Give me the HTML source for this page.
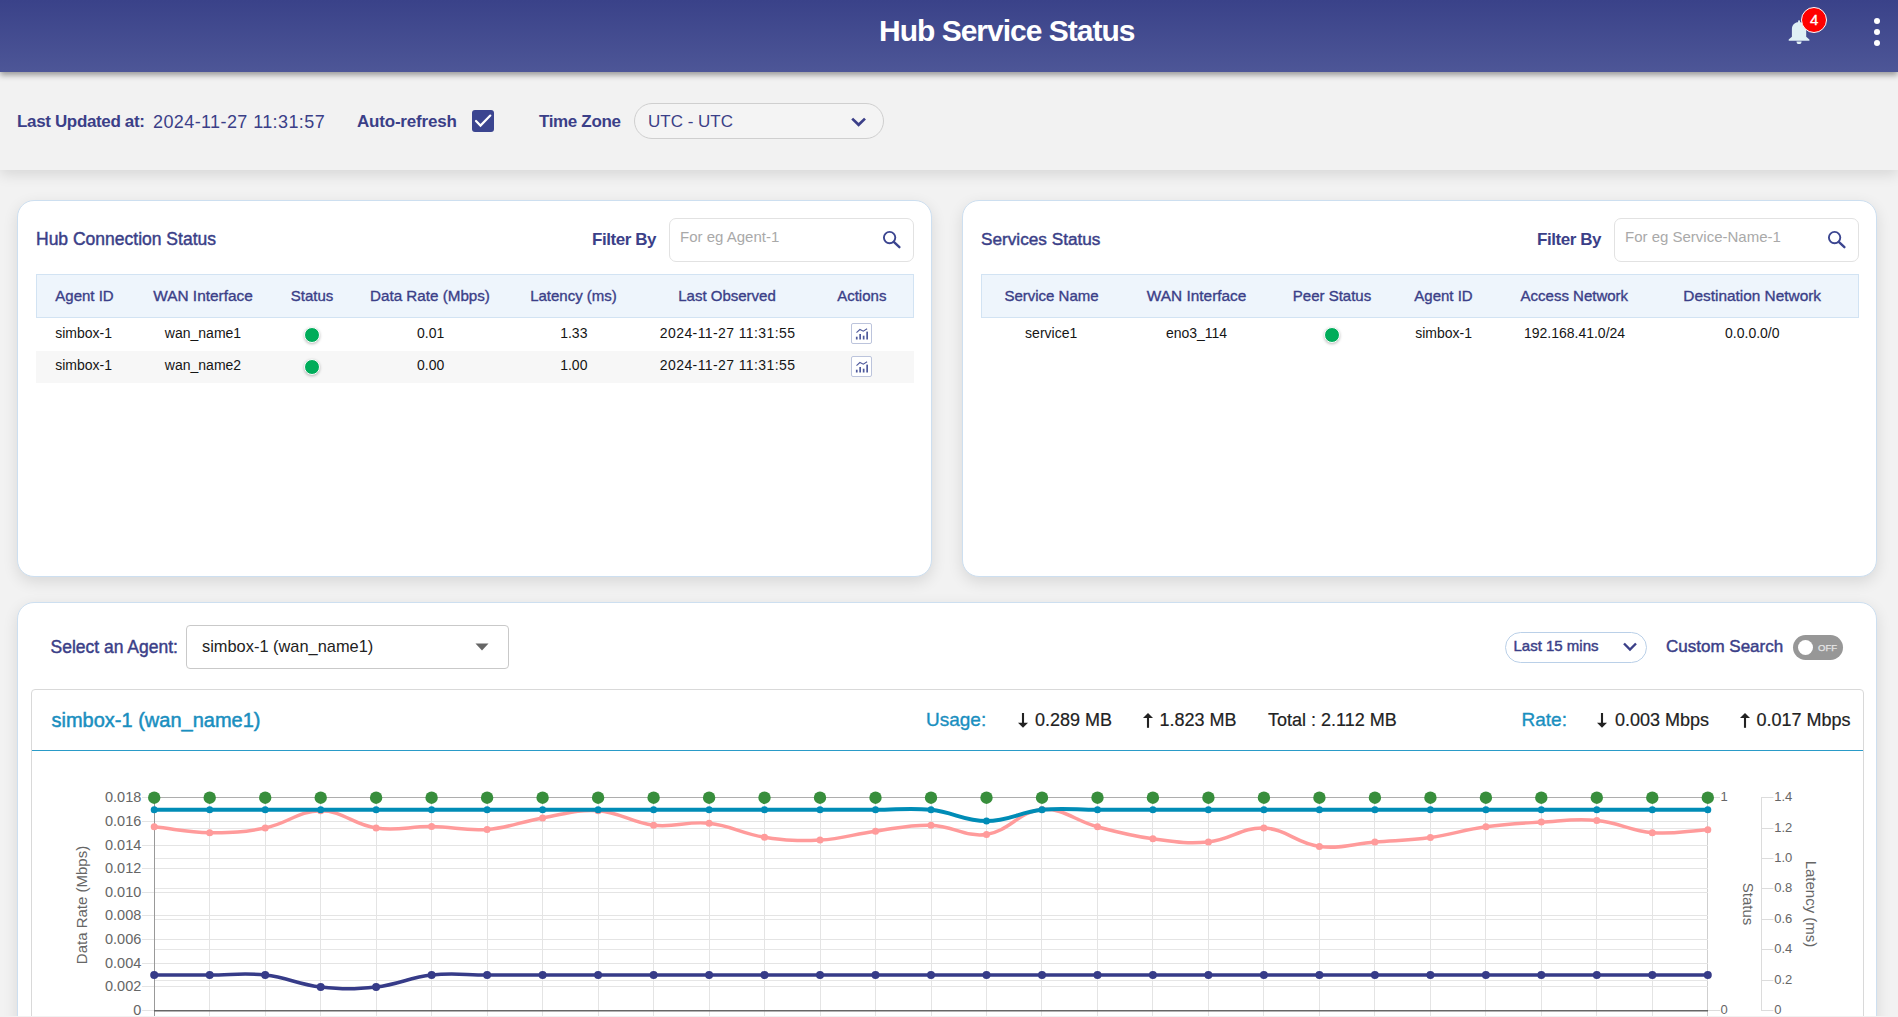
<!DOCTYPE html>
<html><head><meta charset="utf-8">
<style>
*{box-sizing:border-box;margin:0;padding:0}
html,body{width:1898px;height:1017px;overflow:hidden;background:#f2f2f2;font-family:"Liberation Sans",sans-serif;position:relative}
.t{position:absolute;white-space:nowrap;line-height:1}
.c{transform:translateX(-50%)}
#hdr{position:absolute;left:0;top:0;width:1898px;height:72px;background:linear-gradient(#3a4289,#4d5697);box-shadow:0 3px 6px rgba(0,0,0,0.38);z-index:3}
#bar{position:absolute;left:0;top:72px;width:1898px;height:98px;background:#f2f2f2;box-shadow:0 4px 14px rgba(0,0,0,0.12);z-index:2}
.ind{color:#3b3f88}
.panel{position:absolute;background:#fff;border:1px solid #cddff0;border-radius:17px;box-shadow:0 5px 15px rgba(0,0,0,0.11)}
.finp{position:absolute;border:1px solid #e2e2e2;border-radius:7px;background:#fff}
.thead{position:absolute;background:#eef5fc;border:1px solid #d2e3f3}
.th{font-size:15px;color:#3b3f88;-webkit-text-stroke:0.35px #3b3f88}
.sb{-webkit-text-stroke:0.45px #3b3f88}
.sb2{-webkit-text-stroke:0.2px #222}
.td{font-size:14px;color:#151515}
.dot{position:absolute;width:16px;height:16px;border-radius:50%;background:#00ac5a;border:1.6px solid #fff;box-shadow:0 1px 3px rgba(0,0,0,0.28)}
.act{position:absolute;width:21px;height:21px;border:1px solid #bcc4dc;border-radius:2px;background:#fff}
</style></head><body>
<div id="hdr">
  <div class="t" style="left:879px;top:16px;font-size:30px;font-weight:bold;color:#fff;letter-spacing:-1px">Hub Service Status</div>
  <!-- bell -->
  <svg style="position:absolute;left:1786px;top:17px" width="26" height="30" viewBox="0 0 26 30">
    <path d="M5.9 19.7 V12.5 C5.9 7.8 9 5 13.05 5 C17.1 5 20.2 7.8 20.2 12.5 V19.7 L23.4 22.6 V23.8 H2.7 V22.6 Z" fill="#e0f0f5"/>
    <rect x="12.1" y="3.2" width="1.9" height="3" rx="0.9" fill="#e0f0f5"/>
    <path d="M10.5 24.4 H15.6 A2.55 2.55 0 0 1 10.5 24.4 Z" fill="#e0f0f5"/>
  </svg>
  <div style="position:absolute;left:1801px;top:7px;width:26px;height:26px;border-radius:50%;background:#ff0000;border:1.2px solid #fff"></div>
  <div class="t" style="left:1810px;top:12.3px;font-size:15px;color:#fff;-webkit-text-stroke:0.3px #fff">4</div>
  <div style="position:absolute;left:1873.5px;top:17.5px;width:6.5px;height:6.5px;border-radius:50%;background:#fff"></div>
  <div style="position:absolute;left:1873.5px;top:28.7px;width:6.5px;height:6.5px;border-radius:50%;background:#fff"></div>
  <div style="position:absolute;left:1873.5px;top:39.8px;width:6.5px;height:6.5px;border-radius:50%;background:#fff"></div>
</div>
<div id="bar">
  <div class="t ind" style="left:17px;top:41px;font-size:17px;font-weight:bold;letter-spacing:-0.35px">Last Updated at:</div>
  <div class="t ind" style="left:153px;top:40.5px;font-size:18px;letter-spacing:0.4px">2024-11-27 11:31:57</div>
  <div class="t ind" style="left:357px;top:41px;font-size:17px;font-weight:bold;letter-spacing:-0.2px">Auto-refresh</div>
  <div style="position:absolute;left:472px;top:38px;width:22px;height:22px;border-radius:3px;background:#3b4590"></div>
  <svg style="position:absolute;left:472px;top:38px" width="22" height="22" viewBox="0 0 22 22"><path d="M4 11 L8.5 15.6 L18.3 5.6" fill="none" stroke="#fff" stroke-width="2.2" stroke-linecap="round"/></svg>
  <div class="t ind" style="left:539px;top:41px;font-size:17px;font-weight:bold;letter-spacing:-0.35px">Time Zone</div>
  <div style="position:absolute;left:634px;top:31px;width:250px;height:36px;border:1px solid #cfcfcf;border-radius:18px;background:#f4f4f4"></div>
  <div class="t ind" style="left:648px;top:40.5px;font-size:17px">UTC - UTC</div>
  <svg style="position:absolute;left:849px;top:43px" width="20" height="14" viewBox="0 0 20 14"><path d="M3.2 3.6 L9.6 9.8 L16 3.6" fill="none" stroke="#3b3f88" stroke-width="2.7"/></svg>
</div>

<!-- Panel 1 -->
<div class="panel" style="left:17px;top:200px;width:915px;height:377px"></div>
<div class="t ind sb" style="left:36px;top:231.2px;font-size:17.5px">Hub Connection Status</div>
<div class="t ind" style="left:592px;top:230.7px;font-size:17px;font-weight:bold;letter-spacing:-0.45px">Filter By</div>
<div class="finp" style="left:669px;top:218px;width:245px;height:44px"></div>
<div class="t" style="left:680px;top:229.3px;font-size:15px;color:#a9a9a9">For eg Agent-1</div>
<svg style="position:absolute;left:878px;top:226px" width="26" height="26" viewBox="0 0 26 26"><circle cx="11.6" cy="11.6" r="5.7" fill="none" stroke="#3b4590" stroke-width="1.9"/><path d="M15.8 15.9 L21.4 21.2" stroke="#3b4590" stroke-width="2.4" stroke-linecap="round"/></svg>
<div class="thead" style="left:36px;top:274px;width:878px;height:44px"></div>
<div class="t th c" style="left:84.5px;top:287.9px">Agent ID</div>
<div class="t th c" style="left:203px;top:287.9px;font-size:15.4px">WAN Interface</div>
<div class="t th c" style="left:312px;top:287.9px">Status</div>
<div class="t th c" style="left:430px;top:287.9px;font-size:15.2px">Data Rate (Mbps)</div>
<div class="t th c" style="left:573.5px;top:287.9px">Latency (ms)</div>
<div class="t th c" style="left:727px;top:287.9px">Last Observed</div>
<div class="t th c" style="left:861.8px;top:287.9px">Actions</div>
<div style="position:absolute;left:36px;top:350.5px;width:878px;height:32.5px;background:#f7f7f7"></div>
<div class="t td c" style="left:83.6px;top:325.6px">simbox-1</div>
<div class="t td c" style="left:203px;top:325.6px">wan_name1</div>
<div class="dot" style="left:304px;top:326.7px"></div>
<div class="t td c" style="left:430.6px;top:325.6px">0.01</div>
<div class="t td c" style="left:573.8px;top:325.6px">1.33</div>
<div class="t td c" style="left:727.6px;top:325.6px;letter-spacing:0.4px">2024-11-27 11:31:55</div>
<div class="act" style="left:851.4px;top:323.3px"><svg style="position:absolute;left:0;top:0" width="19" height="19" viewBox="0 0 19 19"><g fill="#4f5a9c"><rect x="3.9" y="12.7" width="1.7" height="2.8"/><rect x="7.3" y="10" width="1.7" height="5.5"/><rect x="10.8" y="11.7" width="1.7" height="3.8"/><rect x="14.3" y="7.6" width="1.7" height="7.9"/></g><path d="M4.5 8.7 L7.9 5.5 L11.3 7.2 L15.1 4.8" fill="none" stroke="#4f5a9c" stroke-width="1.1"/></svg></div>
<div class="t td c" style="left:83.6px;top:358.2px">simbox-1</div>
<div class="t td c" style="left:203px;top:358.2px">wan_name2</div>
<div class="dot" style="left:304px;top:359px"></div>
<div class="t td c" style="left:430.6px;top:358.2px">0.00</div>
<div class="t td c" style="left:573.8px;top:358.2px">1.00</div>
<div class="t td c" style="left:727.6px;top:358.2px;letter-spacing:0.4px">2024-11-27 11:31:55</div>
<div class="act" style="left:851.4px;top:356px"><svg style="position:absolute;left:0;top:0" width="19" height="19" viewBox="0 0 19 19"><g fill="#4f5a9c"><rect x="3.9" y="12.7" width="1.7" height="2.8"/><rect x="7.3" y="10" width="1.7" height="5.5"/><rect x="10.8" y="11.7" width="1.7" height="3.8"/><rect x="14.3" y="7.6" width="1.7" height="7.9"/></g><path d="M4.5 8.7 L7.9 5.5 L11.3 7.2 L15.1 4.8" fill="none" stroke="#4f5a9c" stroke-width="1.1"/></svg></div>

<!-- Panel 2 -->
<div class="panel" style="left:962px;top:200px;width:915px;height:377px"></div>
<div class="t ind sb" style="left:981px;top:231.2px;font-size:17.2px">Services Status</div>
<div class="t ind" style="left:1537px;top:230.7px;font-size:17px;font-weight:bold;letter-spacing:-0.45px">Filter By</div>
<div class="finp" style="left:1614px;top:218px;width:245px;height:44px"></div>
<div class="t" style="left:1625px;top:229.3px;font-size:15px;color:#a9a9a9">For eg Service-Name-1</div>
<svg style="position:absolute;left:1823px;top:226px" width="26" height="26" viewBox="0 0 26 26"><circle cx="11.6" cy="11.6" r="5.7" fill="none" stroke="#3b4590" stroke-width="1.9"/><path d="M15.8 15.9 L21.4 21.2" stroke="#3b4590" stroke-width="2.4" stroke-linecap="round"/></svg>
<div class="thead" style="left:981px;top:274px;width:878px;height:44px"></div>
<div class="t th c" style="left:1051.5px;top:287.9px">Service Name</div>
<div class="t th c" style="left:1196.6px;top:287.9px;font-size:15.4px">WAN Interface</div>
<div class="t th c" style="left:1332px;top:287.9px">Peer Status</div>
<div class="t th c" style="left:1443.5px;top:287.9px">Agent ID</div>
<div class="t th c" style="left:1574.3px;top:287.9px">Access Network</div>
<div class="t th c" style="left:1752.2px;top:287.9px;font-size:15.4px">Destination Network</div>
<div class="t td c" style="left:1051.2px;top:325.6px">service1</div>
<div class="t td c" style="left:1196.5px;top:325.6px">eno3_114</div>
<div class="dot" style="left:1324px;top:326.7px"></div>
<div class="t td c" style="left:1443.6px;top:325.6px">simbox-1</div>
<div class="t td c" style="left:1574.5px;top:325.6px">192.168.41.0/24</div>
<div class="t td c" style="left:1752.3px;top:325.6px">0.0.0.0/0</div>

<!-- Panel 3 -->
<div class="panel" style="left:17px;top:602px;width:1860px;height:460px"></div>
<div class="t ind sb" style="left:50.5px;top:639.1px;font-size:17.5px">Select an Agent:</div>
<div style="position:absolute;left:186px;top:625px;width:323px;height:44px;border:1px solid #c9c9c9;border-radius:4px;background:#fff"></div>
<div class="t" style="left:202px;top:638.4px;font-size:16.4px;color:#222">simbox-1 (wan_name1)</div>
<svg style="position:absolute;left:474px;top:642px" width="16" height="10" viewBox="0 0 16 10"><path d="M1.5 1.5 h13 l-6.5 7z" fill="#666"/></svg>
<div style="position:absolute;left:1505px;top:632px;width:142px;height:31px;border:1px solid #bad0e8;border-radius:16px;background:#fff"></div>
<div class="t ind sb" style="left:1513.5px;top:638.3px;font-size:15px">Last 15 mins</div>
<svg style="position:absolute;left:1620px;top:639px" width="20" height="16" viewBox="0 0 20 16"><path d="M4 4.5 l6 6 l6 -6" fill="none" stroke="#3b3f88" stroke-width="2.4"/></svg>
<div class="t ind sb" style="left:1666px;top:638.2px;font-size:17px">Custom Search</div>
<div style="position:absolute;left:1793px;top:635px;width:49.5px;height:25px;border-radius:13px;background:#979797"></div>
<div style="position:absolute;left:1798px;top:640px;width:15.2px;height:15.2px;border-radius:50%;background:#fff"></div>
<div class="t" style="left:1818px;top:643px;font-size:9.5px;color:#e6e6e6;-webkit-text-stroke:0.25px #e6e6e6">OFF</div>

<!-- chart card -->
<div style="position:absolute;left:31px;top:689px;width:1833px;height:340px;border:1px solid #d9d9d9;border-radius:4px;background:#fff"></div>
<div style="position:absolute;left:32px;top:749.5px;width:1831px;height:1.5px;background:#2a9bc8"></div>
<div class="t" style="left:51.5px;top:709.7px;font-size:20px;color:#1a8fbf;-webkit-text-stroke:0.5px #1a8fbf">simbox-1 (wan_name1)</div>
<div class="t sb" style="left:926px;top:710.3px;font-size:19px;color:#1a8fbf;-webkit-text-stroke:0.35px #1a8fbf">Usage:</div>
<svg style="position:absolute;left:1017.0px;top:711px" width="12" height="18" viewBox="0 0 12 18"><rect x="4.95" y="2" width="2.1" height="12" fill="#222"/><path d="M1 11.8 L6 16.8 L11 11.8 Z" fill="#222"/></svg>
<div class="t sb2" style="left:1035px;top:710.8px;font-size:18px;color:#222">0.289 MB</div>
<svg style="position:absolute;left:1142.0px;top:711px" width="12" height="18" viewBox="0 0 12 18"><rect x="4.95" y="4" width="2.1" height="12.8" fill="#222"/><path d="M1 7 L6 2 L11 7 Z" fill="#222"/></svg>
<div class="t sb2" style="left:1159.5px;top:710.8px;font-size:18px;color:#222">1.823 MB</div>
<div class="t sb2" style="left:1268px;top:710.8px;font-size:18px;color:#222">Total : 2.112 MB</div>
<div class="t sb" style="left:1521.5px;top:710.3px;font-size:19px;color:#1a8fbf;-webkit-text-stroke:0.35px #1a8fbf">Rate:</div>
<svg style="position:absolute;left:1596.0px;top:711px" width="12" height="18" viewBox="0 0 12 18"><rect x="4.95" y="2" width="2.1" height="12" fill="#222"/><path d="M1 11.8 L6 16.8 L11 11.8 Z" fill="#222"/></svg>
<div class="t sb2" style="left:1615px;top:710.8px;font-size:18px;color:#222">0.003 Mbps</div>
<svg style="position:absolute;left:1738.5px;top:711px" width="12" height="18" viewBox="0 0 12 18"><rect x="4.95" y="4" width="2.1" height="12.8" fill="#222"/><path d="M1 7 L6 2 L11 7 Z" fill="#222"/></svg>
<div class="t sb2" style="left:1756.4px;top:710.8px;font-size:18px;color:#222">0.017 Mbps</div>
<svg id="chart" width="1898" height="1017" viewBox="0 0 1898 1017" style="position:absolute;left:0;top:0" font-family="Liberation Sans, sans-serif" font-size="14" fill="#666">
<line x1="154.5" y1="797" x2="154.5" y2="1016" stroke="#e4e4e4" stroke-width="1"/>
<line x1="209.5" y1="797" x2="209.5" y2="1016" stroke="#e4e4e4" stroke-width="1"/>
<line x1="265.5" y1="797" x2="265.5" y2="1016" stroke="#e4e4e4" stroke-width="1"/>
<line x1="320.5" y1="797" x2="320.5" y2="1016" stroke="#e4e4e4" stroke-width="1"/>
<line x1="376.5" y1="797" x2="376.5" y2="1016" stroke="#e4e4e4" stroke-width="1"/>
<line x1="431.5" y1="797" x2="431.5" y2="1016" stroke="#e4e4e4" stroke-width="1"/>
<line x1="487.5" y1="797" x2="487.5" y2="1016" stroke="#e4e4e4" stroke-width="1"/>
<line x1="542.5" y1="797" x2="542.5" y2="1016" stroke="#e4e4e4" stroke-width="1"/>
<line x1="598.5" y1="797" x2="598.5" y2="1016" stroke="#e4e4e4" stroke-width="1"/>
<line x1="653.5" y1="797" x2="653.5" y2="1016" stroke="#e4e4e4" stroke-width="1"/>
<line x1="709.5" y1="797" x2="709.5" y2="1016" stroke="#e4e4e4" stroke-width="1"/>
<line x1="764.5" y1="797" x2="764.5" y2="1016" stroke="#e4e4e4" stroke-width="1"/>
<line x1="820.5" y1="797" x2="820.5" y2="1016" stroke="#e4e4e4" stroke-width="1"/>
<line x1="875.5" y1="797" x2="875.5" y2="1016" stroke="#e4e4e4" stroke-width="1"/>
<line x1="931.5" y1="797" x2="931.5" y2="1016" stroke="#e4e4e4" stroke-width="1"/>
<line x1="986.5" y1="797" x2="986.5" y2="1016" stroke="#e4e4e4" stroke-width="1"/>
<line x1="1041.5" y1="797" x2="1041.5" y2="1016" stroke="#e4e4e4" stroke-width="1"/>
<line x1="1097.5" y1="797" x2="1097.5" y2="1016" stroke="#e4e4e4" stroke-width="1"/>
<line x1="1152.5" y1="797" x2="1152.5" y2="1016" stroke="#e4e4e4" stroke-width="1"/>
<line x1="1208.5" y1="797" x2="1208.5" y2="1016" stroke="#e4e4e4" stroke-width="1"/>
<line x1="1263.5" y1="797" x2="1263.5" y2="1016" stroke="#e4e4e4" stroke-width="1"/>
<line x1="1319.5" y1="797" x2="1319.5" y2="1016" stroke="#e4e4e4" stroke-width="1"/>
<line x1="1374.5" y1="797" x2="1374.5" y2="1016" stroke="#e4e4e4" stroke-width="1"/>
<line x1="1430.5" y1="797" x2="1430.5" y2="1016" stroke="#e4e4e4" stroke-width="1"/>
<line x1="1485.5" y1="797" x2="1485.5" y2="1016" stroke="#e4e4e4" stroke-width="1"/>
<line x1="1541.5" y1="797" x2="1541.5" y2="1016" stroke="#e4e4e4" stroke-width="1"/>
<line x1="1596.5" y1="797" x2="1596.5" y2="1016" stroke="#e4e4e4" stroke-width="1"/>
<line x1="1652.5" y1="797" x2="1652.5" y2="1016" stroke="#e4e4e4" stroke-width="1"/>
<line x1="1707.5" y1="797" x2="1707.5" y2="1016" stroke="#cfcfcf" stroke-width="1"/>
<line x1="142" y1="1010.5" x2="1708" y2="1010.5" stroke="#e4e4e4" stroke-width="1"/>
<line x1="142" y1="986.5" x2="1708" y2="986.5" stroke="#e4e4e4" stroke-width="1"/>
<line x1="142" y1="963.5" x2="1708" y2="963.5" stroke="#e4e4e4" stroke-width="1"/>
<line x1="142" y1="939.5" x2="1708" y2="939.5" stroke="#e4e4e4" stroke-width="1"/>
<line x1="142" y1="915.5" x2="1708" y2="915.5" stroke="#e4e4e4" stroke-width="1"/>
<line x1="142" y1="892.5" x2="1708" y2="892.5" stroke="#e4e4e4" stroke-width="1"/>
<line x1="142" y1="868.5" x2="1708" y2="868.5" stroke="#e4e4e4" stroke-width="1"/>
<line x1="142" y1="845.5" x2="1708" y2="845.5" stroke="#e4e4e4" stroke-width="1"/>
<line x1="142" y1="821.5" x2="1708" y2="821.5" stroke="#e4e4e4" stroke-width="1"/>
<line x1="142" y1="797.5" x2="1708" y2="797.5" stroke="#e4e4e4" stroke-width="1"/>
<line x1="154.3" y1="1010.5" x2="1708" y2="1010.5" stroke="#e6e6e6" stroke-width="1"/>
<line x1="154.3" y1="980.5" x2="1708" y2="980.5" stroke="#e6e6e6" stroke-width="1"/>
<line x1="154.3" y1="949.5" x2="1708" y2="949.5" stroke="#e6e6e6" stroke-width="1"/>
<line x1="154.3" y1="919.5" x2="1708" y2="919.5" stroke="#e6e6e6" stroke-width="1"/>
<line x1="154.3" y1="888.5" x2="1708" y2="888.5" stroke="#e6e6e6" stroke-width="1"/>
<line x1="154.3" y1="858.5" x2="1708" y2="858.5" stroke="#e6e6e6" stroke-width="1"/>
<line x1="154.3" y1="828.5" x2="1708" y2="828.5" stroke="#e6e6e6" stroke-width="1"/>
<line x1="154.3" y1="797.5" x2="1708" y2="797.5" stroke="#e6e6e6" stroke-width="1"/>
<line x1="142" y1="1010.5" x2="154.3" y2="1010.5" stroke="#e4e4e4" stroke-width="1"/>
<line x1="142" y1="986.5" x2="154.3" y2="986.5" stroke="#e4e4e4" stroke-width="1"/>
<line x1="142" y1="963.5" x2="154.3" y2="963.5" stroke="#e4e4e4" stroke-width="1"/>
<line x1="142" y1="939.5" x2="154.3" y2="939.5" stroke="#e4e4e4" stroke-width="1"/>
<line x1="142" y1="915.5" x2="154.3" y2="915.5" stroke="#e4e4e4" stroke-width="1"/>
<line x1="142" y1="892.5" x2="154.3" y2="892.5" stroke="#e4e4e4" stroke-width="1"/>
<line x1="142" y1="868.5" x2="154.3" y2="868.5" stroke="#e4e4e4" stroke-width="1"/>
<line x1="142" y1="845.5" x2="154.3" y2="845.5" stroke="#e4e4e4" stroke-width="1"/>
<line x1="142" y1="821.5" x2="154.3" y2="821.5" stroke="#e4e4e4" stroke-width="1"/>
<line x1="142" y1="797.5" x2="154.3" y2="797.5" stroke="#e4e4e4" stroke-width="1"/>
<line x1="154" y1="797.5" x2="1708" y2="797.5" stroke="#adadad" stroke-width="1"/>
<line x1="154.5" y1="797" x2="154.5" y2="1016" stroke="#999" stroke-width="1"/>
<line x1="154" y1="1010.75" x2="1708" y2="1010.75" stroke="#666" stroke-width="1.5"/>
<text x="141.3" y="1015.4" text-anchor="end" font-size="14.5">0</text>
<text x="141.3" y="991.4" text-anchor="end" font-size="14.5">0.002</text>
<text x="141.3" y="968.4" text-anchor="end" font-size="14.5">0.004</text>
<text x="141.3" y="944.4" text-anchor="end" font-size="14.5">0.006</text>
<text x="141.3" y="920.4" text-anchor="end" font-size="14.5">0.008</text>
<text x="141.3" y="897.4" text-anchor="end" font-size="14.5">0.010</text>
<text x="141.3" y="873.4" text-anchor="end" font-size="14.5">0.012</text>
<text x="141.3" y="850.4" text-anchor="end" font-size="14.5">0.014</text>
<text x="141.3" y="826.4" text-anchor="end" font-size="14.5">0.016</text>
<text x="141.3" y="802.4" text-anchor="end" font-size="14.5">0.018</text>
<line x1="1761.5" y1="797" x2="1761.5" y2="1011" stroke="#dcdcdc" stroke-width="1"/>
<line x1="1761.5" y1="1010.5" x2="1773.5" y2="1010.5" stroke="#dcdcdc" stroke-width="1"/>
<text x="1774.2" y="1014.1" font-size="13">0</text>
<line x1="1761.5" y1="980.5" x2="1773.5" y2="980.5" stroke="#dcdcdc" stroke-width="1"/>
<text x="1774.2" y="984.1" font-size="13">0.2</text>
<line x1="1761.5" y1="949.5" x2="1773.5" y2="949.5" stroke="#dcdcdc" stroke-width="1"/>
<text x="1774.2" y="953.1" font-size="13">0.4</text>
<line x1="1761.5" y1="919.5" x2="1773.5" y2="919.5" stroke="#dcdcdc" stroke-width="1"/>
<text x="1774.2" y="923.1" font-size="13">0.6</text>
<line x1="1761.5" y1="888.5" x2="1773.5" y2="888.5" stroke="#dcdcdc" stroke-width="1"/>
<text x="1774.2" y="892.1" font-size="13">0.8</text>
<line x1="1761.5" y1="858.5" x2="1773.5" y2="858.5" stroke="#dcdcdc" stroke-width="1"/>
<text x="1774.2" y="862.1" font-size="13">1.0</text>
<line x1="1761.5" y1="828.5" x2="1773.5" y2="828.5" stroke="#dcdcdc" stroke-width="1"/>
<text x="1774.2" y="832.1" font-size="13">1.2</text>
<line x1="1761.5" y1="797.5" x2="1773.5" y2="797.5" stroke="#dcdcdc" stroke-width="1"/>
<text x="1774.2" y="801.1" font-size="13">1.4</text>
<line x1="1708" y1="797.5" x2="1720" y2="797.5" stroke="#dcdcdc" stroke-width="1"/>
<line x1="1708" y1="1010.5" x2="1720" y2="1010.5" stroke="#dcdcdc" stroke-width="1"/>
<text x="1720.5" y="801" font-size="13">1</text>
<text x="1720.5" y="1014" font-size="13">0</text>
<text transform="translate(86.8,905) rotate(-90)" text-anchor="middle" font-size="15">Data Rate (Mbps)</text>
<text transform="translate(1742.7,904) rotate(90)" text-anchor="middle" font-size="15">Status</text>
<text transform="translate(1805.8,904) rotate(90)" text-anchor="middle" font-size="15">Latency (ms)</text>
<path d="M154.2,826.8 C176.4,829.2 187.5,832.5 209.7,832.7 C231.9,832.9 243.4,832.3 265.2,828.0 C287.8,823.5 298.5,810.8 320.7,810.8 C342.9,810.8 353.4,824.8 376.1,828.0 C397.8,831.1 409.4,826.3 431.6,826.6 C453.8,826.9 465.1,831.2 487.1,829.5 C509.5,827.7 520.3,821.7 542.6,817.9 C564.7,814.2 576.2,809.3 598.1,810.7 C620.6,812.2 631.0,822.6 653.6,825.2 C675.4,827.7 687.2,820.9 709.1,823.3 C731.6,825.7 742.0,833.8 764.5,837.2 C786.4,840.5 798.0,841.3 820.0,840.1 C842.4,838.9 853.2,834.2 875.5,831.2 C897.6,828.2 908.9,824.6 931.0,825.2 C953.3,825.8 965.2,837.4 986.5,834.4 C1009.6,831.1 1019.3,811.0 1042.0,809.4 C1063.7,807.9 1075.0,820.8 1097.5,826.8 C1119.4,832.6 1130.5,835.7 1152.9,838.8 C1174.9,841.8 1186.6,844.1 1208.4,842.0 C1231.0,839.8 1242.0,827.1 1263.9,828.0 C1286.4,828.9 1296.7,843.5 1319.4,846.4 C1341.1,849.1 1352.7,843.8 1374.9,842.0 C1397.1,840.2 1408.3,840.5 1430.4,837.5 C1452.7,834.4 1463.5,829.9 1485.9,826.8 C1507.9,823.7 1519.1,823.4 1541.3,822.1 C1563.5,820.8 1574.9,818.4 1596.8,820.5 C1619.3,822.6 1629.9,830.8 1652.3,832.7 C1674.3,834.5 1685.6,830.9 1707.8,829.7" fill="none" stroke="#ff9b9b" stroke-width="3.5"/>
<circle cx="154.2" cy="826.8" r="3.5" fill="#ff9b9b"/>
<circle cx="209.7" cy="832.7" r="3.5" fill="#ff9b9b"/>
<circle cx="265.2" cy="828.0" r="3.5" fill="#ff9b9b"/>
<circle cx="320.7" cy="810.8" r="3.5" fill="#ff9b9b"/>
<circle cx="376.1" cy="828.0" r="3.5" fill="#ff9b9b"/>
<circle cx="431.6" cy="826.6" r="3.5" fill="#ff9b9b"/>
<circle cx="487.1" cy="829.5" r="3.5" fill="#ff9b9b"/>
<circle cx="542.6" cy="817.9" r="3.5" fill="#ff9b9b"/>
<circle cx="598.1" cy="810.7" r="3.5" fill="#ff9b9b"/>
<circle cx="653.6" cy="825.2" r="3.5" fill="#ff9b9b"/>
<circle cx="709.1" cy="823.3" r="3.5" fill="#ff9b9b"/>
<circle cx="764.5" cy="837.2" r="3.5" fill="#ff9b9b"/>
<circle cx="820.0" cy="840.1" r="3.5" fill="#ff9b9b"/>
<circle cx="875.5" cy="831.2" r="3.5" fill="#ff9b9b"/>
<circle cx="931.0" cy="825.2" r="3.5" fill="#ff9b9b"/>
<circle cx="986.5" cy="834.4" r="3.5" fill="#ff9b9b"/>
<circle cx="1042.0" cy="809.4" r="3.5" fill="#ff9b9b"/>
<circle cx="1097.5" cy="826.8" r="3.5" fill="#ff9b9b"/>
<circle cx="1152.9" cy="838.8" r="3.5" fill="#ff9b9b"/>
<circle cx="1208.4" cy="842.0" r="3.5" fill="#ff9b9b"/>
<circle cx="1263.9" cy="828.0" r="3.5" fill="#ff9b9b"/>
<circle cx="1319.4" cy="846.4" r="3.5" fill="#ff9b9b"/>
<circle cx="1374.9" cy="842.0" r="3.5" fill="#ff9b9b"/>
<circle cx="1430.4" cy="837.5" r="3.5" fill="#ff9b9b"/>
<circle cx="1485.9" cy="826.8" r="3.5" fill="#ff9b9b"/>
<circle cx="1541.3" cy="822.1" r="3.5" fill="#ff9b9b"/>
<circle cx="1596.8" cy="820.5" r="3.5" fill="#ff9b9b"/>
<circle cx="1652.3" cy="832.7" r="3.5" fill="#ff9b9b"/>
<circle cx="1707.8" cy="829.7" r="3.5" fill="#ff9b9b"/>
<path d="M154.2,809.8 C176.4,809.8 187.5,809.8 209.7,809.8 C231.9,809.8 243.0,809.8 265.2,809.8 C287.4,809.8 298.5,809.8 320.7,809.8 C342.9,809.8 353.9,809.8 376.1,809.8 C398.3,809.8 409.4,809.8 431.6,809.8 C453.8,809.8 464.9,809.8 487.1,809.8 C509.3,809.8 520.4,809.8 542.6,809.8 C564.8,809.8 575.9,809.8 598.1,809.8 C620.3,809.8 631.4,809.8 653.6,809.8 C675.8,809.8 686.9,809.8 709.1,809.8 C731.3,809.8 742.4,809.8 764.5,809.8 C786.7,809.8 797.8,809.8 820.0,809.8 C842.2,809.8 853.3,809.8 875.5,809.8 C897.7,809.8 909.0,807.6 931.0,809.8 C953.4,812.1 964.3,821.1 986.5,821.1 C1008.7,821.1 1019.6,812.1 1042.0,809.8 C1063.9,807.6 1075.3,809.8 1097.5,809.8 C1119.7,809.8 1130.8,809.8 1152.9,809.8 C1175.1,809.8 1186.2,809.8 1208.4,809.8 C1230.6,809.8 1241.7,809.8 1263.9,809.8 C1286.1,809.8 1297.2,809.8 1319.4,809.8 C1341.6,809.8 1352.7,809.8 1374.9,809.8 C1397.1,809.8 1408.2,809.8 1430.4,809.8 C1452.6,809.8 1463.7,809.8 1485.9,809.8 C1508.1,809.8 1519.2,809.8 1541.3,809.8 C1563.5,809.8 1574.6,809.8 1596.8,809.8 C1619.0,809.8 1630.1,809.8 1652.3,809.8 C1674.5,809.8 1685.6,809.8 1707.8,809.8" fill="none" stroke="#008cb6" stroke-width="4"/>
<circle cx="154.2" cy="809.8" r="3.5" fill="#008cb6"/>
<circle cx="209.7" cy="809.8" r="3.5" fill="#008cb6"/>
<circle cx="265.2" cy="809.8" r="3.5" fill="#008cb6"/>
<circle cx="320.7" cy="809.8" r="3.5" fill="#008cb6"/>
<circle cx="376.1" cy="809.8" r="3.5" fill="#008cb6"/>
<circle cx="431.6" cy="809.8" r="3.5" fill="#008cb6"/>
<circle cx="487.1" cy="809.8" r="3.5" fill="#008cb6"/>
<circle cx="542.6" cy="809.8" r="3.5" fill="#008cb6"/>
<circle cx="598.1" cy="809.8" r="3.5" fill="#008cb6"/>
<circle cx="653.6" cy="809.8" r="3.5" fill="#008cb6"/>
<circle cx="709.1" cy="809.8" r="3.5" fill="#008cb6"/>
<circle cx="764.5" cy="809.8" r="3.5" fill="#008cb6"/>
<circle cx="820.0" cy="809.8" r="3.5" fill="#008cb6"/>
<circle cx="875.5" cy="809.8" r="3.5" fill="#008cb6"/>
<circle cx="931.0" cy="809.8" r="3.5" fill="#008cb6"/>
<circle cx="986.5" cy="821.1" r="3.5" fill="#008cb6"/>
<circle cx="1042.0" cy="809.8" r="3.5" fill="#008cb6"/>
<circle cx="1097.5" cy="809.8" r="3.5" fill="#008cb6"/>
<circle cx="1152.9" cy="809.8" r="3.5" fill="#008cb6"/>
<circle cx="1208.4" cy="809.8" r="3.5" fill="#008cb6"/>
<circle cx="1263.9" cy="809.8" r="3.5" fill="#008cb6"/>
<circle cx="1319.4" cy="809.8" r="3.5" fill="#008cb6"/>
<circle cx="1374.9" cy="809.8" r="3.5" fill="#008cb6"/>
<circle cx="1430.4" cy="809.8" r="3.5" fill="#008cb6"/>
<circle cx="1485.9" cy="809.8" r="3.5" fill="#008cb6"/>
<circle cx="1541.3" cy="809.8" r="3.5" fill="#008cb6"/>
<circle cx="1596.8" cy="809.8" r="3.5" fill="#008cb6"/>
<circle cx="1652.3" cy="809.8" r="3.5" fill="#008cb6"/>
<circle cx="1707.8" cy="809.8" r="3.5" fill="#008cb6"/>
<path d="M154.2,975.0 C176.4,975.0 187.5,975.0 209.7,975.0 C231.9,975.0 243.2,972.6 265.2,975.0 C287.6,977.4 298.2,984.6 320.7,987.0 C342.6,989.4 354.2,989.4 376.1,987.0 C398.6,984.6 409.2,977.4 431.6,975.0 C453.6,972.6 464.9,975.0 487.1,975.0 C509.3,975.0 520.4,975.0 542.6,975.0 C564.8,975.0 575.9,975.0 598.1,975.0 C620.3,975.0 631.4,975.0 653.6,975.0 C675.8,975.0 686.9,975.0 709.1,975.0 C731.3,975.0 742.4,975.0 764.5,975.0 C786.7,975.0 797.8,975.0 820.0,975.0 C842.2,975.0 853.3,975.0 875.5,975.0 C897.7,975.0 908.8,975.0 931.0,975.0 C953.2,975.0 964.3,975.0 986.5,975.0 C1008.7,975.0 1019.8,975.0 1042.0,975.0 C1064.2,975.0 1075.3,975.0 1097.5,975.0 C1119.7,975.0 1130.8,975.0 1152.9,975.0 C1175.1,975.0 1186.2,975.0 1208.4,975.0 C1230.6,975.0 1241.7,975.0 1263.9,975.0 C1286.1,975.0 1297.2,975.0 1319.4,975.0 C1341.6,975.0 1352.7,975.0 1374.9,975.0 C1397.1,975.0 1408.2,975.0 1430.4,975.0 C1452.6,975.0 1463.7,975.0 1485.9,975.0 C1508.1,975.0 1519.2,975.0 1541.3,975.0 C1563.5,975.0 1574.6,975.0 1596.8,975.0 C1619.0,975.0 1630.1,975.0 1652.3,975.0 C1674.5,975.0 1685.6,975.0 1707.8,975.0" fill="none" stroke="#363b88" stroke-width="3.5"/>
<circle cx="154.2" cy="975.0" r="4" fill="#363b88"/>
<circle cx="209.7" cy="975.0" r="4" fill="#363b88"/>
<circle cx="265.2" cy="975.0" r="4" fill="#363b88"/>
<circle cx="320.7" cy="987.0" r="4" fill="#363b88"/>
<circle cx="376.1" cy="987.0" r="4" fill="#363b88"/>
<circle cx="431.6" cy="975.0" r="4" fill="#363b88"/>
<circle cx="487.1" cy="975.0" r="4" fill="#363b88"/>
<circle cx="542.6" cy="975.0" r="4" fill="#363b88"/>
<circle cx="598.1" cy="975.0" r="4" fill="#363b88"/>
<circle cx="653.6" cy="975.0" r="4" fill="#363b88"/>
<circle cx="709.1" cy="975.0" r="4" fill="#363b88"/>
<circle cx="764.5" cy="975.0" r="4" fill="#363b88"/>
<circle cx="820.0" cy="975.0" r="4" fill="#363b88"/>
<circle cx="875.5" cy="975.0" r="4" fill="#363b88"/>
<circle cx="931.0" cy="975.0" r="4" fill="#363b88"/>
<circle cx="986.5" cy="975.0" r="4" fill="#363b88"/>
<circle cx="1042.0" cy="975.0" r="4" fill="#363b88"/>
<circle cx="1097.5" cy="975.0" r="4" fill="#363b88"/>
<circle cx="1152.9" cy="975.0" r="4" fill="#363b88"/>
<circle cx="1208.4" cy="975.0" r="4" fill="#363b88"/>
<circle cx="1263.9" cy="975.0" r="4" fill="#363b88"/>
<circle cx="1319.4" cy="975.0" r="4" fill="#363b88"/>
<circle cx="1374.9" cy="975.0" r="4" fill="#363b88"/>
<circle cx="1430.4" cy="975.0" r="4" fill="#363b88"/>
<circle cx="1485.9" cy="975.0" r="4" fill="#363b88"/>
<circle cx="1541.3" cy="975.0" r="4" fill="#363b88"/>
<circle cx="1596.8" cy="975.0" r="4" fill="#363b88"/>
<circle cx="1652.3" cy="975.0" r="4" fill="#363b88"/>
<circle cx="1707.8" cy="975.0" r="4" fill="#363b88"/>
<circle cx="154.2" cy="797.7" r="6.2" fill="#388e3c"/>
<circle cx="209.7" cy="797.7" r="6.2" fill="#388e3c"/>
<circle cx="265.2" cy="797.7" r="6.2" fill="#388e3c"/>
<circle cx="320.7" cy="797.7" r="6.2" fill="#388e3c"/>
<circle cx="376.1" cy="797.7" r="6.2" fill="#388e3c"/>
<circle cx="431.6" cy="797.7" r="6.2" fill="#388e3c"/>
<circle cx="487.1" cy="797.7" r="6.2" fill="#388e3c"/>
<circle cx="542.6" cy="797.7" r="6.2" fill="#388e3c"/>
<circle cx="598.1" cy="797.7" r="6.2" fill="#388e3c"/>
<circle cx="653.6" cy="797.7" r="6.2" fill="#388e3c"/>
<circle cx="709.1" cy="797.7" r="6.2" fill="#388e3c"/>
<circle cx="764.5" cy="797.7" r="6.2" fill="#388e3c"/>
<circle cx="820.0" cy="797.7" r="6.2" fill="#388e3c"/>
<circle cx="875.5" cy="797.7" r="6.2" fill="#388e3c"/>
<circle cx="931.0" cy="797.7" r="6.2" fill="#388e3c"/>
<circle cx="986.5" cy="797.7" r="6.2" fill="#388e3c"/>
<circle cx="1042.0" cy="797.7" r="6.2" fill="#388e3c"/>
<circle cx="1097.5" cy="797.7" r="6.2" fill="#388e3c"/>
<circle cx="1152.9" cy="797.7" r="6.2" fill="#388e3c"/>
<circle cx="1208.4" cy="797.7" r="6.2" fill="#388e3c"/>
<circle cx="1263.9" cy="797.7" r="6.2" fill="#388e3c"/>
<circle cx="1319.4" cy="797.7" r="6.2" fill="#388e3c"/>
<circle cx="1374.9" cy="797.7" r="6.2" fill="#388e3c"/>
<circle cx="1430.4" cy="797.7" r="6.2" fill="#388e3c"/>
<circle cx="1485.9" cy="797.7" r="6.2" fill="#388e3c"/>
<circle cx="1541.3" cy="797.7" r="6.2" fill="#388e3c"/>
<circle cx="1596.8" cy="797.7" r="6.2" fill="#388e3c"/>
<circle cx="1652.3" cy="797.7" r="6.2" fill="#388e3c"/>
<circle cx="1707.8" cy="797.7" r="6.2" fill="#388e3c"/>
</svg>
<div style="position:absolute;left:0;top:1016px;width:1898px;height:1px;background:#f1f1f1;z-index:5"></div>
</body></html>
